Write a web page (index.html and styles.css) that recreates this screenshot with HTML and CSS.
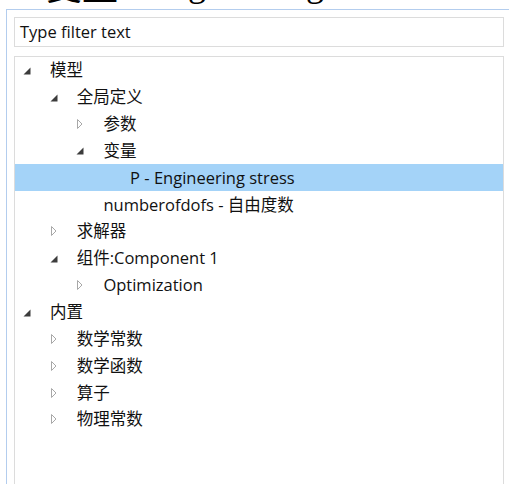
FILE: index.html
```html
<!DOCTYPE html>
<html lang="zh-CN">
<head>
<meta charset="utf-8">
<title>变量</title>
<link rel="stylesheet" href="styles.css">
</head>
<body>
<div class="caption"><span class="caption-text"><span class="caption-cjk">变量</span> - Engineering stress</span></div>
<div class="panel">
  <div class="filter">Type filter text</div>
  <div class="tree">
    <div class="row l0"><span class="tog"><svg class="ex" width="8" height="8" viewBox="0 0 8 8"><path d="M7.5 0.5V7.5H0.5Z" fill="#3c3c3c"/></svg></span><span class="label">模型</span></div>
    <div class="row l1"><span class="tog"><svg class="ex" width="8" height="8" viewBox="0 0 8 8"><path d="M7.5 0.5V7.5H0.5Z" fill="#3c3c3c"/></svg></span><span class="label">全局定义</span></div>
    <div class="row l2"><span class="tog"><svg class="co" width="6" height="10" viewBox="0 0 6 10"><path d="M0.5 0.5L5 5L0.5 9.5Z" fill="none" stroke="#a8a8a8"/></svg></span><span class="label">参数</span></div>
    <div class="row l2"><span class="tog"><svg class="ex" width="8" height="8" viewBox="0 0 8 8"><path d="M7.5 0.5V7.5H0.5Z" fill="#3c3c3c"/></svg></span><span class="label">变量</span></div>
    <div class="row l3 selected"><span class="tog"></span><span class="label">P - Engineering stress</span></div>
    <div class="row l2"><span class="tog"></span><span class="label">numberofdofs - 自由度数</span></div>
    <div class="row l1"><span class="tog"><svg class="co" width="6" height="10" viewBox="0 0 6 10"><path d="M0.5 0.5L5 5L0.5 9.5Z" fill="none" stroke="#a8a8a8"/></svg></span><span class="label">求解器</span></div>
    <div class="row l1"><span class="tog"><svg class="ex" width="8" height="8" viewBox="0 0 8 8"><path d="M7.5 0.5V7.5H0.5Z" fill="#3c3c3c"/></svg></span><span class="label">组件:Component 1</span></div>
    <div class="row l2"><span class="tog"><svg class="co" width="6" height="10" viewBox="0 0 6 10"><path d="M0.5 0.5L5 5L0.5 9.5Z" fill="none" stroke="#a8a8a8"/></svg></span><span class="label">Optimization</span></div>
    <div class="row l0"><span class="tog"><svg class="ex" width="8" height="8" viewBox="0 0 8 8"><path d="M7.5 0.5V7.5H0.5Z" fill="#3c3c3c"/></svg></span><span class="label">内置</span></div>
    <div class="row l1"><span class="tog"><svg class="co" width="6" height="10" viewBox="0 0 6 10"><path d="M0.5 0.5L5 5L0.5 9.5Z" fill="none" stroke="#a8a8a8"/></svg></span><span class="label">数学常数</span></div>
    <div class="row l1"><span class="tog"><svg class="co" width="6" height="10" viewBox="0 0 6 10"><path d="M0.5 0.5L5 5L0.5 9.5Z" fill="none" stroke="#a8a8a8"/></svg></span><span class="label">数学函数</span></div>
    <div class="row l1"><span class="tog"><svg class="co" width="6" height="10" viewBox="0 0 6 10"><path d="M0.5 0.5L5 5L0.5 9.5Z" fill="none" stroke="#a8a8a8"/></svg></span><span class="label">算子</span></div>
    <div class="row l1"><span class="tog"><svg class="co" width="6" height="10" viewBox="0 0 6 10"><path d="M0.5 0.5L5 5L0.5 9.5Z" fill="none" stroke="#a8a8a8"/></svg></span><span class="label">物理常数</span></div>
  </div>
</div>
</body>
</html>
```
FILE: styles.css
```css
html, body {
  margin: 0;
  padding: 0;
  background: #ffffff;
  overflow: hidden;
}

body {
  width: 509px;
  height: 484px;
  font-family: "Open Sans", "Noto Sans CJK SC", sans-serif;
  font-size: 16.5px;
  color: #111111;
}

/* heading above the panel, scrolled so only its lowest strokes show */
.caption {
  height: 9px;
  overflow: hidden;
}

.caption-text {
  display: block;
  margin-top: -36px;
  margin-left: 46px;
  font-family: "Liberation Serif", "Noto Sans CJK SC", serif;
  font-size: 36px;
  line-height: 40px;
  color: #000;
  white-space: nowrap;
}

.caption-cjk {
  vertical-align: -4px;
}

.panel {
  margin-left: 6px;
  border-top: 1px solid #b3cdee;
  border-left: 1px solid #b3cdee;
  padding: 7px 5px 0 7px;
  height: 480px;
}

.filter {
  height: 28px;
  border: 1px solid #dcdcdc;
  padding-left: 5px;
  line-height: 28px;
}

.tree {
  margin-top: 9px;
  border: 1px solid #dcdcdc;
  height: 440px;
}

.row {
  display: flex;
  align-items: center;
  height: 26.85px;
  white-space: nowrap;
}

.row.selected {
  background: #a4d3f8;
}

.l0 { padding-left: 8px; }
.l1 { padding-left: 34.7px; }
.l2 { padding-left: 61.4px; }
.l3 { padding-left: 88.1px; }

.tog {
  flex: 0 0 27px;
  display: flex;
  align-items: center;
}

.tog .ex {
  margin-top: 1px;
}

.tog .co {
  margin-left: 1px;
}

.label {
  line-height: 22px;
}
```
